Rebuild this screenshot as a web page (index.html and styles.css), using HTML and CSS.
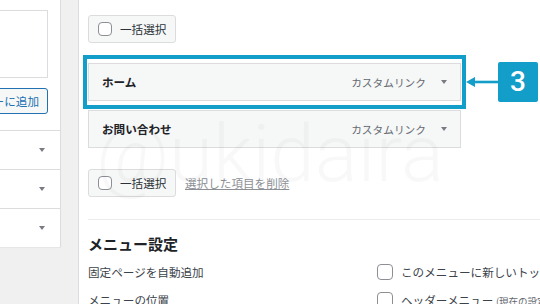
FILE: index.html
```html
<!DOCTYPE html>
<html lang="ja">
<head>
<meta charset="utf-8">
<title>メニュー</title>
<link rel="stylesheet" href="styles.css">
</head>
<body>
<div class="screen">
  <aside class="side">
    <div class="textbox"></div>
    <div class="side-btn-row"><button class="add-btn">メニューに追加</button></div>
    <div class="acc">
      <div class="acc-row"><span class="tri"></span></div>
      <div class="acc-row"><span class="tri"></span></div>
      <div class="acc-row"><span class="tri"></span></div>
    </div>
  </aside>
  <main class="pane">
    <div class="bulk-row">
      <label class="bulk-btn"><span class="cb"></span>一括選択</label>
    </div>
    <ul class="items">
      <li class="item"><span class="item-title">ホーム</span><span class="item-type">カスタムリンク</span><span class="tri"></span></li>
      <li class="item"><span class="item-title">お問い合わせ</span><span class="item-type">カスタムリンク</span><span class="tri"></span></li>
    </ul>
    <div class="bulk-row bulk-row2">
      <label class="bulk-btn"><span class="cb"></span>一括選択</label>
      <a class="remove-link" href="#">選択した項目を削除</a>
    </div>
    <div class="sep"></div>
    <h3 class="settings-title">メニュー設定</h3>
    <div class="settings">
      <div class="set-label">固定ページを自動追加</div>
      <div class="set-value"><span class="cb cb-lg"></span><span class="nowrap">このメニューに新しいトップレベルページを自動的に追加</span></div>
      <div class="set-label">メニューの位置</div>
      <div class="set-value"><span class="cb cb-lg"></span><span class="nowrap">ヘッダーメニュー <small class="note">(現在の設定: ヘッダーメニュー)</small></span></div>
    </div>
  </main>
  <div class="watermark" aria-hidden="true">@ukidaira</div>
  <div class="highlight"></div>
  <svg class="arrow" width="32" height="12" viewBox="0 0 32 12"><line x1="7" y1="6" x2="32" y2="6" stroke="#139dc9" stroke-width="2.6"/><polygon points="0,6 9,1 9,11" fill="#139dc9"/></svg>
  <div class="badge">3</div>
</div>
</body>
</html>
```

FILE: styles.css
```css
* { box-sizing: border-box; }
html, body { margin: 0; padding: 0; }
body {
  background: #f0f0f1;
  font-family: "Noto Sans CJK JP", "Noto Sans", sans-serif;
  color: #2c3338;
  overflow: hidden;
}
.screen {
  position: relative;
  display: flex;
  width: 540px;
  height: 304px;
  overflow: hidden;
}
.side {
  flex: 0 0 61px;
  align-self: flex-start;
  background: #fff;
  border-right: 1px solid #dcdcde;
  overflow: hidden;
  box-shadow: 0 1px 1px rgba(0,0,0,0.04);
}
.textbox {
  margin: 10px 12px 0 0;
  height: 68px;
  border: 1px solid #dcdcde;
  border-left: none;
}
.side-btn-row {
  display: flex;
  justify-content: flex-end;
  margin: 10px 12px 0 0;
}
.add-btn {
  flex-shrink: 0;
  height: 26px;
  padding: 0 8px 0 10px;
  border: 1px solid #2271b1;
  border-radius: 3px;
  background: #f6f7f7;
  color: #2271b1;
  font-family: inherit;
  font-size: 11.6px;
  line-height: 24px;
}
.acc {
  margin-top: 16px;
  border-top: 1px solid #dcdcde;
}
.acc-row {
  height: 39px;
  border-bottom: 1px solid #dcdcde;
  display: flex;
  align-items: center;
  justify-content: flex-end;
  padding-right: 15px;
}
.acc-row:last-child { border-bottom: none; height: 38px; }
.tri {
  display: inline-block;
  width: 0;
  height: 0;
  border-left: 3.5px solid transparent;
  border-right: 3.5px solid transparent;
  border-top: 4.5px solid #787c82;
}
.pane {
  flex: 1 0 auto;
  margin-left: 17px;
  background: #fff;
  border-left: 1px solid #dcdcde;
  padding-left: 9px;
  min-width: 470px;
}
.bulk-row {
  display: flex;
  align-items: center;
  margin-top: 15px;
}
.bulk-btn {
  display: inline-flex;
  align-items: center;
  gap: 8px;
  width: 88px;
  height: 28px;
  padding-left: 9px;
  border: 1px solid #dcdcde;
  border-radius: 3px;
  background: #f6f7f7;
  font-size: 11.6px;
  color: #2c3338;
}
.cb {
  display: inline-block;
  flex: 0 0 14px;
  width: 14px;
  height: 14px;
  border: 1px solid #8c8f94;
  border-radius: 4px;
  background: #fff;
}
.cb-lg { flex-basis: 16px; width: 16px; height: 16px; }
.items {
  list-style: none;
  margin: 20px 0 0;
  padding: 0;
}
.item {
  display: flex;
  align-items: center;
  width: 373px;
  height: 38px;
  margin-bottom: 9px;
  padding: 0 13px 0 13px;
  border: 1px solid #dcdcde;
  background: #f6f7f7;
}
.item:last-child { margin-bottom: 0; }
.item-title {
  flex: 1;
  font-size: 11.6px;
  font-weight: 700;
  color: #1d2327;
}
.item-type {
  font-size: 10.7px;
  color: #646970;
  margin-right: 15px;
}
.bulk-row2 { margin-top: 21px; }
.remove-link {
  margin-left: 9px;
  font-size: 11.6px;
  color: #8c8f94;
  text-decoration: underline;
}
.sep {
  margin-top: 22px;
  border-top: 1px solid #ebebeb;
}
.settings-title {
  margin: 14px 0 0;
  font-size: 15px;
  line-height: 20px;
  font-weight: 700;
  color: #1d2327;
}
.settings {
  display: grid;
  grid-template-columns: 289px 1fr;
  grid-auto-rows: 28px;
  align-items: center;
  margin-top: 4px;
  font-size: 11.6px;
  color: #3c434a;
}
.set-value {
  display: flex;
  align-items: center;
  gap: 8px;
  white-space: nowrap;
}
.nowrap { white-space: nowrap; }
.note { font-size: 9.5px; color: #646970; }
.watermark {
  position: absolute;
  left: 96px;
  top: 114px;
  font-family: Roboto, sans-serif;
  font-weight: 300;
  font-size: 80px;
  line-height: 1;
  color: rgba(0,0,0,0.028);
  pointer-events: none;
}
.highlight {
  position: absolute;
  left: 83px;
  top: 55px;
  width: 383px;
  height: 54px;
  border: 4px solid #139dc9;
}
.arrow {
  position: absolute;
  left: 466px;
  top: 76px;
}
.badge {
  position: absolute;
  left: 498px;
  top: 62px;
  width: 40px;
  height: 40px;
  border-radius: 2px;
  background: #139dc9;
  color: #fff;
  font-family: Roboto, sans-serif;
  font-weight: 500;
  font-size: 28px;
  line-height: 40px;
  text-align: center;
}
```
